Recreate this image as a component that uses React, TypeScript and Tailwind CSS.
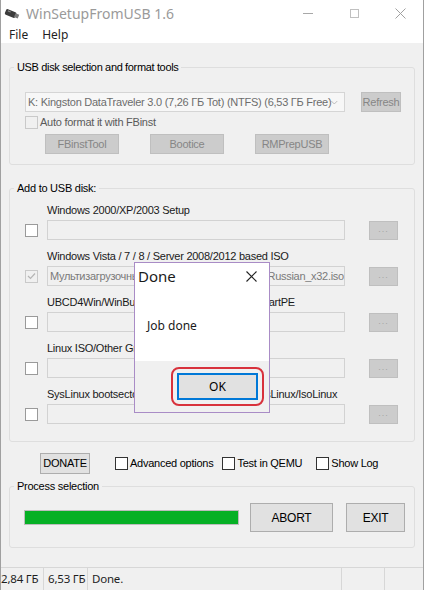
const ui = { fontFamily: '"Liberation Sans", Arial, sans-serif' };
const seg = { fontFamily: '"Noto Sans", "Open Sans", sans-serif' };

type BoxProps = { checked?: boolean; disabled?: boolean; light?: boolean };

const CheckBox = ({ checked, disabled, light }: BoxProps) => (
  <span
    className={
      "flex h-[13px] w-[13px] shrink-0 items-center justify-center border " +
      (disabled
        ? "border-[#c9c9c9] bg-[#f0f0f0]"
        : light
          ? "border-[#9a9a9a] bg-white"
          : "border-[#333333] bg-white")
    }
  >
    {checked && (
      <svg width="9" height="8" viewBox="0 0 9 8">
        <path d="M1 4l2.5 2.5L8 1.5" fill="none" stroke="#b5b5b5" strokeWidth="1.2" />
      </svg>
    )}
  </span>
);

const GrayButton = ({ label, className }: { label: string; className: string }) => (
  <div
    className={
      "flex items-center justify-center border border-[#bfbfbf] bg-[#cccccc] text-[#868686] " +
      className
    }
  >
    {label}
  </div>
);

const rows = [
  { label: "Windows 2000/XP/2003 Setup", value: "", checked: false },
  {
    label: "Windows Vista / 7 / 8 / Server 2008/2012 based ISO",
    value: "Мультизагрузочный_диск_2014_Windows_7_Russian_x32.iso",
    checked: true,
  },
  { label: "UBCD4Win/WinBuilder/Windows FLPC setup/BartPE", value: "", checked: false },
  { label: "Linux ISO/Other Grub4dos compatible ISO", value: "", checked: false },
  {
    label: "SysLinux bootsector/Linux distribution using SysLinux/IsoLinux",
    value: "",
    checked: false,
  },
];

const UsbIcon = () => (
  <svg width="16" height="12" viewBox="0 0 16 12">
    <g transform="rotate(22 8 6)">
      <rect x="1" y="3" width="11" height="6" rx="1.5" fill="#3c3c3c" />
      <rect x="11" y="4" width="4" height="4" fill="#7a7a7a" />
      <rect x="3" y="4" width="3" height="1.2" fill="#8a8a8a" />
    </g>
  </svg>
);

const App = () => {
  return (
    <div
      className="relative flex h-[590px] w-[424px] flex-col overflow-hidden border-x border-[#a0a0a0] bg-[#f0f0f0] text-[11px] tracking-[-0.25px] text-black"
      style={ui}
    >
      {/* title bar */}
      <div className="flex h-[27px] shrink-0 items-center bg-white" style={seg}>
        <div className="ml-[3px] mt-[1px]">
          <UsbIcon />
        </div>
        <span className="ml-[6px] text-[14px] tracking-normal text-[#9a9a9a]">
          WinSetupFromUSB 1.6
        </span>
        <div className="ml-auto flex items-center">
          <div className="flex w-[46px] justify-center">
            <span className="block h-px w-[10px] bg-[#a8a8a8]" />
          </div>
          <div className="flex w-[46px] justify-center">
            <span className="block h-[9px] w-[9px] border border-[#c0c0c0]" />
          </div>
          <div className="flex w-[46px] justify-center">
            <svg width="11" height="11" viewBox="0 0 11 11">
              <path d="M0.5 0.5l10 10M10.5 0.5l-10 10" stroke="#a0a0a0" strokeWidth="1" />
            </svg>
          </div>
        </div>
      </div>

      {/* menu bar */}
      <div
        className="flex h-[16px] shrink-0 items-center gap-[14px] bg-white pl-[8px] text-[12px] tracking-normal text-[#1e1e1e]"
        style={seg}
      >
        <span>File</span>
        <span>Help</span>
      </div>

      <div className="flex flex-col px-[8px]">
        {/* disk selection */}
        <fieldset className="mt-[17px] rounded-[3px] border border-[#dedede] pb-[10px]">
          <legend className="ml-[4px] h-[15px] px-[3px] leading-[15px] tracking-[-0.35px]">
            USB disk selection and format tools
          </legend>
          <div className="flex flex-col pl-[15px]">
            <div className="mt-[17px] flex items-center gap-[16px]">
              <div className="flex h-[20px] w-[320px] items-center border border-[#d5d5d5] bg-[#f7f7f7] pl-[2px] pr-[6px] text-[#6d6d6d]">
                <span className="flex-1 whitespace-nowrap">
                  K: Kingston DataTraveler 3.0 (7,26 ГБ Tot) (NTFS) (6,53 ГБ Free)
                </span>
                <svg width="9" height="5" viewBox="0 0 9 5">
                  <path d="M0.5 0.5l4 4 4-4" fill="none" stroke="#a8a8a8" />
                </svg>
              </div>
              <GrayButton label="Refresh" className="h-[20px] w-[40px]" />
            </div>
            <div className="mt-[4px] flex h-[13px] items-center gap-[2px] text-[#5a5a5a]">
              <CheckBox disabled />
              <span>Auto format it with FBinst</span>
            </div>
            <div className="mt-[5px] flex gap-[31px] pl-[20px]">
              <GrayButton label="FBinstTool" className="h-[20px] w-[74px]" />
              <GrayButton label="Bootice" className="h-[20px] w-[74px]" />
              <GrayButton label="RMPrepUSB" className="h-[20px] w-[74px]" />
            </div>
          </div>
        </fieldset>

        {/* sources */}
        <fieldset className="mt-[16px] rounded-[3px] border border-[#dedede] pb-[17px]">
          <legend className="ml-[4px] h-[15px] px-[3px] leading-[15px]">Add to USB disk:</legend>
          <div className="mt-[7px] flex flex-col gap-[9px] pl-[15px]">
            {rows.map((r) => (
              <div key={r.label} className="flex flex-col gap-[3px]">
                <span className="h-[14px] whitespace-nowrap pl-[22px] leading-[14px] text-[#1a1a1a]">
                  {r.label}
                </span>
                <div className="flex h-[20px] items-center">
                  <CheckBox checked={r.checked} disabled={r.checked} light />
                  <div className="ml-[9px] flex h-[20px] w-[298px] items-center overflow-hidden whitespace-nowrap border border-[#d2d2d2] bg-[#f0f0f0] pl-[2px] tracking-[-0.3px] text-[#7a7a7a]">
                    {r.value}
                  </div>
                  <GrayButton
                    label="..."
                    className="ml-[24px] h-[19px] w-[29px] text-[9px] tracking-[1px] text-[#a5a5a5]"
                  />
                </div>
              </div>
            ))}
          </div>
        </fieldset>

        {/* options */}
        <div className="mt-[11px] flex h-[21px] items-center">
          <div className="ml-[31px] flex h-[21px] w-[50px] items-center justify-center border border-[#adadad] bg-[#e1e1e1]">
            DONATE
          </div>
          <div className="ml-[25px] flex items-center gap-[2px]">
            <CheckBox />
            <span>Advanced options</span>
          </div>
          <div className="ml-[9px] flex items-center gap-[2px]">
            <CheckBox />
            <span>Test in QEMU</span>
          </div>
          <div className="ml-[14px] flex items-center gap-[2px]">
            <CheckBox />
            <span>Show Log</span>
          </div>
        </div>

        {/* progress */}
        <fieldset className="mt-[5px] rounded-[3px] border border-[#dedede] pb-[15px]">
          <legend className="ml-[4px] h-[15px] px-[3px] leading-[15px]">Process selection</legend>
          <div className="mt-[9px] flex items-center pl-[14px]">
            <div className="h-[15px] w-[215px] border border-[#bcbcbc] bg-[#06b025]" />
            <div className="ml-[11px] flex h-[29px] w-[83px] items-center justify-center border border-[#adadad] bg-[#e1e1e1] text-[12px]">
              ABORT
            </div>
            <div className="ml-[13px] flex h-[29px] w-[59px] items-center justify-center border border-[#adadad] bg-[#e1e1e1] text-[12px]">
              EXIT
            </div>
          </div>
        </fieldset>
      </div>

      {/* status bar */}
      <div
        className="mt-auto flex h-[23px] items-center whitespace-nowrap border-t border-[#d7d7d7] text-[11.5px] tracking-[-0.2px] text-[#1e1e1e]"
        style={seg}
      >
        <span className="w-[42px]">2,84 ГБ</span>
        <span className="h-[23px] w-px bg-[#d7d7d7]" />
        <span className="w-[43px] pl-[4px]">6,53 ГБ</span>
        <span className="h-[23px] w-px bg-[#d7d7d7]" />
        <span className="w-[253px] pl-[4px]">Done.</span>
        <span className="h-[23px] w-px bg-[#d7d7d7]" />
        <span className="w-[42px]" />
        <span className="h-[23px] w-px bg-[#d7d7d7]" />
      </div>

      {/* message box */}
      <div
        className="absolute left-[133px] top-[262px] flex h-[151px] w-[136px] flex-col border border-[#a98cc6] bg-white tracking-normal"
        style={seg}
      >
        <div className="flex h-[98px] flex-col bg-white">
          <div className="flex h-[26px] items-center justify-between pl-[3px] pr-[12px]">
            <span className="text-[15px] text-[#1a1a1a]">Done</span>
            <svg width="11" height="11" viewBox="0 0 11 11">
              <path d="M0.5 0.5l10 10M10.5 0.5l-10 10" stroke="#222" strokeWidth="1.1" />
            </svg>
          </div>
          <span className="mt-[28px] pl-[12px] text-[12px] text-[#1a1a1a]">Job done</span>
        </div>
        <div className="flex flex-1 items-center justify-end bg-[#f0f0f0] pr-[5px]">
          <div className="rounded-[8px] border-2 border-[#d8323c] p-[4px]">
            <div className="flex h-[27px] w-[81px] items-center justify-center border-2 border-[#0078d7] bg-[#e1e1e1] text-[12px] text-black">
              OK
            </div>
          </div>
        </div>
      </div>
    </div>
  );
};

export default App;
